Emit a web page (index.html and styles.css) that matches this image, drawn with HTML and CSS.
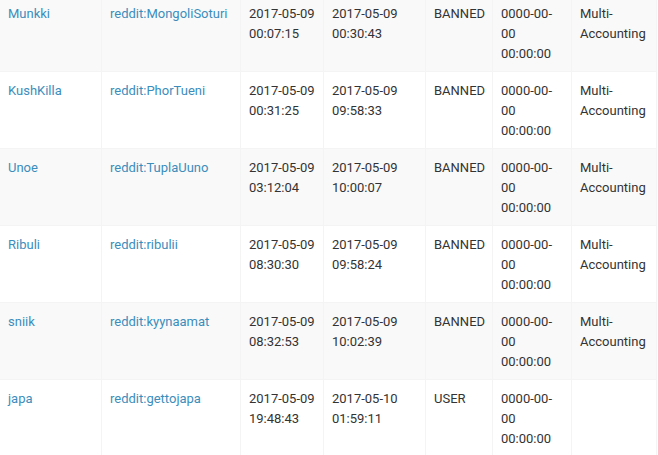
FILE: index.html
```html
<!DOCTYPE html>
<html lang="en">
<head>
    <meta charset="UTF-8">
    <title>Users</title>
    <link rel="stylesheet" href="styles.css">
</head>
<body>
    <table class="user-table">
        <colgroup>
            <col class="col-name">
            <col class="col-account">
            <col class="col-date">
            <col class="col-date2">
            <col class="col-status">
            <col class="col-until">
            <col class="col-reason">
        </colgroup>
        <tbody>
            <tr>
                <td><a href="#">Munkki</a></td>
                <td><a href="#">reddit:MongoliSoturi</a></td>
                <td>2017-05-09 00:07:15</td>
                <td>2017-05-09 00:30:43</td>
                <td>BANNED</td>
                <td>0000-00-00 00:00:00</td>
                <td>Multi-Accounting</td>
            </tr>
            <tr>
                <td><a href="#">KushKilla</a></td>
                <td><a href="#">reddit:PhorTueni</a></td>
                <td>2017-05-09 00:31:25</td>
                <td>2017-05-09 09:58:33</td>
                <td>BANNED</td>
                <td>0000-00-00 00:00:00</td>
                <td>Multi-Accounting</td>
            </tr>
            <tr>
                <td><a href="#">Unoe</a></td>
                <td><a href="#">reddit:TuplaUuno</a></td>
                <td>2017-05-09 03:12:04</td>
                <td>2017-05-09 10:00:07</td>
                <td>BANNED</td>
                <td>0000-00-00 00:00:00</td>
                <td>Multi-Accounting</td>
            </tr>
            <tr>
                <td><a href="#">Ribuli</a></td>
                <td><a href="#">reddit:ribulii</a></td>
                <td>2017-05-09 08:30:30</td>
                <td>2017-05-09 09:58:24</td>
                <td>BANNED</td>
                <td>0000-00-00 00:00:00</td>
                <td>Multi-Accounting</td>
            </tr>
            <tr>
                <td><a href="#">sniik</a></td>
                <td><a href="#">reddit:kyynaamat</a></td>
                <td>2017-05-09 08:32:53</td>
                <td>2017-05-09 10:02:39</td>
                <td>BANNED</td>
                <td>0000-00-00 00:00:00</td>
                <td>Multi-Accounting</td>
            </tr>
            <tr>
                <td><a href="#">japa</a></td>
                <td><a href="#">reddit:gettojapa</a></td>
                <td>2017-05-09 19:48:43</td>
                <td>2017-05-10 01:59:11</td>
                <td>USER</td>
                <td>0000-00-00 00:00:00</td>
                <td></td>
            </tr>
        </tbody>
    </table>
</body>
</html>
```

FILE: styles.css
```css
body {
    font-family: Roboto, "Liberation Sans", sans-serif;
    font-size: 13px;
    line-height: 20px;
    margin: 0;
    background-color: #fff;
    color: #333;
    overflow: hidden;
}
a {
    color: #3c8dbc;
    text-decoration: none;
}
.user-table {
    border-collapse: collapse;
    table-layout: fixed;
    width: 658px;
    margin: -6px 0 0 -1px;
}
.user-table td {
    border: 1px solid #f4f4f4;
    padding: 9px 8px 7px;
    vertical-align: top;
    text-align: left;
}
.user-table tr:nth-child(odd) {
    background-color: #f9f9f9;
}
.col-name { width: 102px; }
.col-account { width: 139px; }
.col-date { width: 83px; }
.col-date2 { width: 102px; }
.col-status { width: 67px; }
.col-until { width: 79px; }
.col-reason { width: 85px; }
```
